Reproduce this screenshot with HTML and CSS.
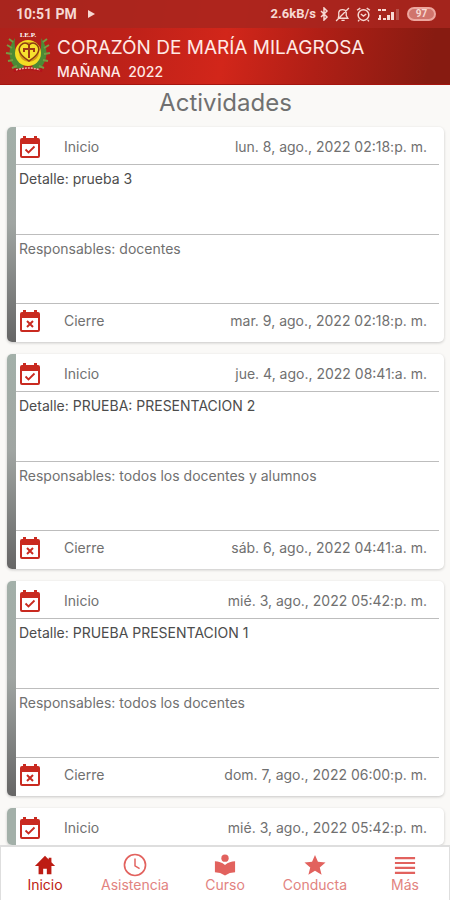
FILE: index.html
```html
<!DOCTYPE html>
<html lang="es">
<head>
<meta charset="utf-8">
<meta name="viewport" content="width=device-width, initial-scale=1">
<title>Actividades</title>
<link rel="stylesheet" href="styles.css">
</head>
<body>
<svg class="defs" aria-hidden="true">
  <symbol id="cal" viewBox="0 0 22 24">
    <path fill="currentColor" fill-rule="evenodd" d="M4 1h3v2h8V1h3v2h1q2 0 2 2v16q0 2-2 2H3q-2 0-2-2V5q0-2 2-2h1zM3 9v12h16V9z"/>
  </symbol>
  <symbol id="cal-check" viewBox="0 0 22 24">
    <use href="#cal"/><path fill="none" stroke="currentColor" stroke-width="1.800" d="m6.500 14.500 3 3 6-6"/>
  </symbol>
  <symbol id="cal-x" viewBox="0 0 22 24">
    <use href="#cal"/><path fill="none" stroke="currentColor" stroke-width="2" d="m8 12 6 6m0-6-6 6"/>
  </symbol>
</svg>
<div class="app">
  <header class="top">
    <div class="status">
      <span>10:51 PM</span>
      <svg class="play" viewBox="0 0 9 10"><path fill="currentColor" d="M1 1l7 4-7 4z"/></svg>
      <span class="speed">2.6kB/s</span>
      <svg class="bt" viewBox="0 0 10 14"><path d="m2 4 6 6-3 3V1l3 3-6 6" fill="none" stroke="currentColor" stroke-width="1.500"/></svg>
      <svg class="sico" viewBox="0 0 14 14"><path d="M3 10.500h9L10.500 8V5Q10 2.500 7 2.500T3.500 5v3zM6 12.500h3M1 13 13 1" fill="none" stroke="currentColor" stroke-width="1.200"/></svg>
      <svg class="sico" viewBox="0 0 14 14"><circle cx="7" cy="7.500" r="5" fill="none" stroke="currentColor" stroke-width="1.400"/><path d="m1 3 3-2m9 2-3-2M4.500 6.500 7 8.500l2.500-2M3 12l-1 1.500m9-1.500 1 1.500" fill="none" stroke="currentColor" stroke-width="1.300"/></svg>
      <svg class="signal" viewBox="0 0 24 14"><path d="M1 2h3v2H1zM5 2h4v2H5zM2 8h2v5H1v-2h1zM6 11h3v2H6zM10 8h3v5h-3zM14 5h3v8h-3z" fill="currentColor"/><path d="M19 2h3v11h-3z" fill="currentColor" opacity=".25"/></svg>
      <span class="battery">97</span>
    </div>
    <div class="brand">
      <svg class="crest" viewBox="0 0 46 44" role="img" aria-label="I.E.P.">
        <path d="M8 34q15 8 30 0l-1 7q-14-4-28 0z" fill="#b5121b"/>
        <path d="M10 7Q-1 22 10 37q7 2 9-2Q8 25 10 7z" fill="#4c8a35"/>
        <path d="M36 7q11 15 0 30-7 2-9-2Q38 25 36 7z" fill="#4c8a35"/>
        <path d="m8 11-4-3m3 9-5-3m5 9-6-1m7 7-5 1m9 5-5 2M38 11l4-3m-3 9 5-3m-5 9 6-1m-7 7 5 1m-9 5 5 2" stroke="#769b43" stroke-width="2"/>
        <circle cx="23" cy="22" r="13" fill="#f4dd24"/>
        <circle cx="24" cy="21" r="10" fill="#d39a18"/>
        <path d="M24 30Q10 21 16 14q4-4 8 0 4-4 8 0 6 7-8 16z" fill="#f7e12e" stroke="#8b3c14" stroke-width="1.500"/>
        <path d="M24 14v13m-5-6v-3h10v3" fill="none" stroke="#9c3a14" stroke-width="2"/>
        <path d="M11 39q12-4 24 0" fill="none" stroke="#eab0a0" stroke-width="1.500" stroke-dasharray="2 1"/>
        <text class="crest-text" x="23" y="6" text-anchor="middle">I.E.P.</text>
      </svg>
      <div>
        <h1 class="school">CORAZÓN DE MARÍA MILAGROSA</h1>
        <p class="shift">MAÑANA&nbsp; 2022</p>
      </div>
    </div>
  </header>

  <main class="content">
    <h2 class="title">Actividades</h2>
    <article class="card">
      <div class="row"><svg class="cal"><use href="#cal-check"/></svg><span>Inicio</span><time>lun. 8, ago., 2022 02:18:p. m.</time></div>
      <p class="text detail">Detalle: prueba 3</p>
      <p class="text">Responsables: docentes</p>
      <div class="row"><svg class="cal"><use href="#cal-x"/></svg><span>Cierre</span><time>mar. 9, ago., 2022 02:18:p. m.</time></div>
    </article>
    <article class="card">
      <div class="row"><svg class="cal"><use href="#cal-check"/></svg><span>Inicio</span><time>jue. 4, ago., 2022 08:41:a. m.</time></div>
      <p class="text detail">Detalle: PRUEBA: PRESENTACION 2</p>
      <p class="text">Responsables: todos los docentes y alumnos</p>
      <div class="row"><svg class="cal"><use href="#cal-x"/></svg><span>Cierre</span><time>sáb. 6, ago., 2022 04:41:a. m.</time></div>
    </article>
    <article class="card">
      <div class="row"><svg class="cal"><use href="#cal-check"/></svg><span>Inicio</span><time>mié. 3, ago., 2022 05:42:p. m.</time></div>
      <p class="text detail">Detalle: PRUEBA PRESENTACION 1</p>
      <p class="text">Responsables: todos los docentes</p>
      <div class="row"><svg class="cal"><use href="#cal-x"/></svg><span>Cierre</span><time>dom. 7, ago., 2022 06:00:p. m.</time></div>
    </article>
    <article class="card flat">
      <div class="row"><svg class="cal"><use href="#cal-check"/></svg><span>Inicio</span><time>mié. 3, ago., 2022 05:42:p. m.</time></div>
    </article>
  </main>

  <nav class="tabs">
    <a class="tab active" href="#inicio"><svg viewBox="0 0 24 24"><path fill="currentColor" d="M12 2 1 13h4v9h5v-6h4v6h5v-9h4l-4-4V4h-3v2z"/></svg>Inicio</a>
    <a class="tab" href="#asistencia"><svg viewBox="0 0 24 24"><circle cx="12" cy="12" r="11.500" fill="none" stroke="currentColor" stroke-width="1.800"/><path d="M12 5v8l5 3" fill="none" stroke="currentColor" stroke-width="1.600"/></svg>Asistencia</a>
    <a class="tab" href="#curso"><svg viewBox="0 0 24 24"><circle cx="12" cy="4.500" r="4" fill="currentColor"/><path fill="currentColor" d="M1 8q6 0 11 4 5-4 11-4v12q-6 0-11 3.500Q7 20 1 20z"/></svg>Curso</a>
    <a class="tab" href="#conducta"><svg viewBox="0 0 24 24"><path fill="currentColor" d="m12 1 3.200 7.500 8.300.7-6.300 5.400 2 8L12 18.300l-7.200 4.300 2-8L.5 9.200l8.300-.7z"/></svg>Conducta</a>
    <a class="tab" href="#mas"><svg viewBox="0 0 24 24"><path d="M1 4.500h22M1 9.800h22M1 15.200h22M1 20.500h22" stroke="currentColor" stroke-width="2.400"/></svg>Más</a>
  </nav>
</div>
</body>
</html>
```
FILE: styles.css
```css
* { box-sizing: border-box; }
body, h1, h2, p { margin: 0; }
body {
  background: #faf9f7;
  color: #707070;
  font-family: Inter, "Noto Sans", sans-serif;
}
.defs { position: absolute; width: 0; height: 0; }
.app { display: flex; flex-direction: column; height: 100vh; }

.top {
  flex: none;
  background: linear-gradient(100deg, #ad211b 0%, #bd2119 28%, #d2261a 50%, #b01f16 70%, #871b11 95%);
  border-bottom: 1px solid #a5150f;
  color: #ffe9e4;
}
.status {
  display: flex;
  align-items: center;
  height: 28px;
  padding: 0 14px 0 16px;
  background: rgba(168, 38, 31, 0.85);
  color: #f7d9d3;
  font: 700 14px/28px Roboto, sans-serif;
}
.play { width: 9px; height: 10px; margin-left: 10px; }
.speed { margin-left: auto; font-size: 13px; }
.bt { width: 10px; height: 14px; margin-left: 3px; }
.sico { width: 15px; height: 15px; margin-left: 6px; }
.signal { width: 24px; height: 14px; margin: 0 6px; }
.battery {
  width: 29px;
  border: 2px solid #eda79f;
  border-radius: 7px;
  background: #d0746c;
  font-size: 10px;
  line-height: 10px;
  text-align: center;
}
.brand { display: flex; gap: 6px; height: 56px; padding: 3px 5px; }
.crest { width: 46px; height: 44px; }
.crest-text { font: 700 7px "Liberation Serif", serif; fill: #fff; }
.school { padding-top: 4px; font-size: 19px; font-weight: 400; line-height: 26px; }
.shift { font-size: 14px; font-weight: 500; line-height: 22px; }

.content { flex: 1; min-height: 0; overflow: hidden; padding: 0 6px 0 7px; }
.title {
  padding: 3px 0 9px;
  font-size: 24px;
  font-weight: 400;
  line-height: 30px;
  text-align: center;
}
.card {
  position: relative;
  margin-bottom: 12px;
  padding: 0 5px 0 9px;
  border-radius: 5px;
  background: #fff;
  box-shadow: 0 1px 3px rgba(0, 0, 0, 0.2);
  overflow: hidden;
}
.card::before {
  content: "";
  position: absolute;
  inset: 0 auto 0 0;
  width: 9px;
  background: linear-gradient(#a3b0a9, #a0a5a2 45%, #666);
}
.card.flat::before { background: #a3b0a9; }
.row {
  display: flex;
  align-items: center;
  height: 37px;
  padding: 2px 12px 0 3px;
  font-size: 14px;
  line-height: 20px;
}
.cal { width: 22px; height: 24px; margin-right: 23px; color: #c92a20; }
.row time { margin-left: auto; }
.text {
  height: 69px;
  padding: 4px 3px;
  border-top: 1px solid #bdbdbd;
  font-size: 14px;
  line-height: 20px;
}
.text + .row { border-top: 1px solid #bdbdbd; height: 39px; padding-top: 0; padding-bottom: 4px; }
.detail { height: 70px; color: #4c4c4c; }

.tabs {
  flex: none;
  display: flex;
  border-top: 2px solid #dedede;
  background: #fff;
  box-shadow: inset 1px 0 #dedede, inset -1px 0 #dedede;
}
.tab {
  flex: 1;
  display: flex;
  flex-direction: column;
  align-items: center;
  gap: 1px;
  height: 53px;
  padding-top: 7px;
  color: #e2837f;
  font-size: 14px;
  line-height: 16px;
  text-decoration: none;
}
.tab svg { width: 22px; height: 22px; overflow: visible; color: #e2625e; }
.tab.active, .tab.active svg { color: #bd1c13; }
```
